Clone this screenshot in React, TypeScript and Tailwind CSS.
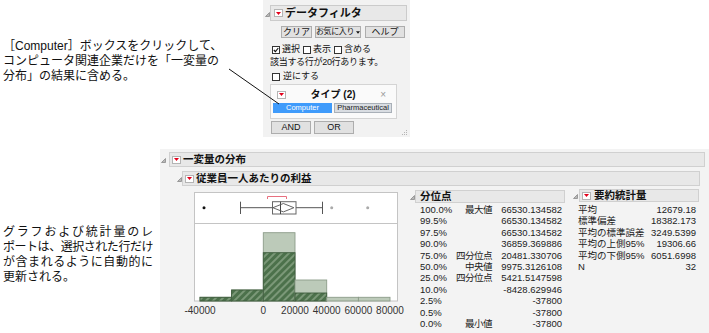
import React from 'react';

const RedMenu: React.FC<{ className?: string }> = ({ className = '' }) => (
  <span className={`flex h-[8px] w-[9px] shrink-0 items-center justify-center border border-[#b4b4b4] bg-white ${className}`}>
    <svg width="5" height="3" viewBox="0 0 5 3">
      <polygon points="0,0 5,0 2.5,3" fill="#e3001b" />
    </svg>
  </span>
);

const Disclose: React.FC<{ className?: string }> = ({ className = '' }) => (
  <svg width="5" height="5" viewBox="0 0 5 5" className={`shrink-0 ${className}`}>
    <polygon points="4.5,0.5 4.5,4.5 0.5,4.5" fill="#b8b8b8" stroke="#8a8a8a" strokeWidth="0.8" />
  </svg>
);

const CheckBox: React.FC<{ checked?: boolean }> = ({ checked }) => (
  <span className="flex h-[8px] w-[8px] shrink-0 items-center justify-center border border-[#333] bg-white">
    {checked && (
      <svg width="6" height="6" viewBox="0 0 6 6">
        <path d="M0.8 3 L2.4 4.7 L5.3 1" fill="none" stroke="#111" strokeWidth="1.1" />
      </svg>
    )}
  </span>
);

const Btn: React.FC<{ w: string; children: React.ReactNode }> = ({ w, children }) => (
  <div className={`flex h-[12px] ${w} items-center justify-center whitespace-nowrap border border-[#adadad] bg-[#e1e1e1] text-[9px] leading-none text-[#111]`}>
    {children}
  </div>
);

const DataFilter: React.FC = () => (
  <div className="flex h-[137px] w-[147px] flex-col bg-[#f2f2f2] pl-[2px] pr-[3px] text-[#111]">
    <div className="mt-[5px] flex items-end">
      <Disclose className="mb-[4px]" />
      <div className="flex h-[16px] flex-1 items-center border border-[#cbcbcb] bg-[#e8e8e8] pl-[3px]">
        <RedMenu />
        <span className="ml-[2px] text-[11px] font-bold leading-none">データフィルタ</span>
      </div>
    </div>
    <div className="ml-[16px] mt-[5px] flex">
      <Btn w="w-[31px]">クリア</Btn>
      <div className="ml-[3px]">
        <Btn w="w-[46px]">
          <span className="text-[8px] tracking-[-0.4px]">お気に入り</span>
          <svg width="5" height="3" viewBox="0 0 5 3" className="ml-[2px]">
            <polygon points="0,0 5,0 2.5,3" fill="#111" />
          </svg>
        </Btn>
      </div>
      <div className="ml-[4px]">
        <Btn w="w-[40px]">ヘルプ</Btn>
      </div>
    </div>
    <div className="ml-[7px] mt-[7px] flex h-[9px] items-center text-[9px] leading-none">
      <CheckBox checked />
      <span className="ml-[2px]">選択</span>
      <span className="ml-[3px]"><CheckBox /></span>
      <span className="ml-[2px]">表示</span>
      <span className="ml-[3px]"><CheckBox /></span>
      <span className="ml-[2px]">含める</span>
    </div>
    <div className="ml-[5px] mt-[4px] h-[9px] text-[9px] leading-none tracking-[-0.3px]">該当する行が20行あります。</div>
    <div className="ml-[7px] mt-[5px] flex h-[9px] items-center text-[9px] leading-none">
      <CheckBox />
      <span className="ml-[3px]">逆にする</span>
    </div>
    <div className="ml-[5px] mt-[3px] flex h-[35px] w-[127px] flex-col border border-[#d4d4d4] bg-[#fafafa]">
      <div className="mt-[5px] flex h-[9px] items-center pl-[6px] pr-[10px]">
        <RedMenu />
        <span className="flex-1 text-center text-[10px] font-bold leading-none">タイプ (2)</span>
        <span className="text-[10px] leading-none text-[#999]">×</span>
      </div>
      <div className="ml-[2px] mt-[4px] flex">
        <div className="flex h-[10px] w-[59px] items-center justify-center bg-[#3f9bfb] text-[7.5px] leading-none text-white">Computer</div>
        <div className="ml-[2px] flex h-[10px] w-[58px] items-center justify-center border border-[#a9b0b8] bg-[#d9dde2] text-[7.5px] leading-none text-[#222]">Pharmaceutical</div>
      </div>
    </div>
    <div className="mt-[2px] flex items-end pl-[6px]">
      <div className="flex h-[13px] w-[40px] items-center justify-center border border-[#adadad] bg-[#e1e1e1] text-[9px] leading-none">AND</div>
      <div className="ml-[3px] flex h-[13px] w-[40px] items-center justify-center border border-[#adadad] bg-[#e1e1e1] text-[9px] leading-none">OR</div>
      <svg width="7" height="7" viewBox="0 0 7 7" className="mb-[-2px] ml-auto mr-[-1px]">
        <rect x="5" y="1" width="1" height="1" fill="#b5b5b5" />
        <rect x="3" y="3" width="1" height="1" fill="#b5b5b5" />
        <rect x="5" y="3" width="1" height="1" fill="#b5b5b5" />
        <rect x="1" y="5" width="1" height="1" fill="#b5b5b5" />
        <rect x="3" y="5" width="1" height="1" fill="#b5b5b5" />
        <rect x="5" y="5" width="1" height="1" fill="#b5b5b5" />
      </svg>
    </div>
  </div>
);

// x/y in svg space: svg left = 182, top = 189 in page coords
const bins = [
  { x0: 18, x1: 49.6, light: 108.3, dark: 108.3 },
  { x0: 49.6, x1: 81.3, light: 101, dark: 101 },
  { x0: 81.3, x1: 113, light: 43.7, dark: 63.7 },
  { x0: 113, x1: 144.7, light: 91, dark: 104 },
  { x0: 144.7, x1: 176.4, light: 108.3, dark: null },
  { x0: 176.4, x1: 208, light: 108.3, dark: null },
];

const ticks = [
  { x: 18, label: '-40000' },
  { x: 81.3, label: '0' },
  { x: 113, label: '20000' },
  { x: 144.7, label: '40000' },
  { x: 176.4, label: '60000' },
  { x: 208, label: '80000' },
];

const Plot: React.FC = () => (
  <svg width="224" height="132" viewBox="0 0 224 132" className="shrink-0">
    <defs>
      <pattern id="hatch" width="5" height="5" patternUnits="userSpaceOnUse" patternTransform="rotate(45)">
        <rect width="5" height="5" fill="#4c714b" />
        <rect width="2" height="5" fill="#7b9878" />
      </pattern>
    </defs>
    <rect x="12.5" y="3.5" width="203" height="108.5" fill="#fff" stroke="#c4c4c4" />
    <line x1="12.5" y1="34.5" x2="215.5" y2="34.5" stroke="#c4c4c4" />
    {/* box plot */}
    <circle cx="22" cy="18.7" r="1.5" fill="#111" />
    <circle cx="149.7" cy="18.7" r="1.5" fill="#aaa" />
    <circle cx="185.7" cy="18.7" r="1.5" fill="#aaa" />
    <line x1="58" y1="18.7" x2="90.3" y2="18.7" stroke="#555" />
    <line x1="114" y1="18.7" x2="140.7" y2="18.7" stroke="#555" />
    <line x1="58.5" y1="12.7" x2="58.5" y2="25" stroke="#555" />
    <line x1="140.5" y1="12.7" x2="140.5" y2="25" stroke="#555" />
    <rect x="90.5" y="12.7" width="23.5" height="12.3" fill="#fff" stroke="#666" />
    <line x1="98.5" y1="12.7" x2="98.5" y2="25" stroke="#444" />
    <polygon points="90.9,18.7 101.4,14.5 111.9,18.7 101.4,22.9" fill="none" stroke="#555" strokeWidth="0.9" />
    <polyline points="85.5,10 85.5,7.5 104.5,7.5 104.5,10" fill="none" stroke="#e8707f" />
    {/* histogram */}
    {bins.map((b, i) => (
      <g key={i}>
        <rect x={b.x0} y={b.light} width={b.x1 - b.x0} height={112 - b.light} fill="#bccab9" stroke="#8c9c89" strokeWidth="0.9" />
        {b.dark !== null && (
          <rect x={b.x0} y={b.dark} width={b.x1 - b.x0} height={112 - b.dark} fill="url(#hatch)" stroke="#3e5c3d" strokeWidth="0.9" />
        )}
      </g>
    ))}
    {ticks.map((t) => (
      <text key={t.label} x={t.x} y="124.5" textAnchor="middle" fontSize="10" fill="#333" fontFamily="Liberation Sans, sans-serif">
        {t.label}
      </text>
    ))}
  </svg>
);

const quantiles: [string, string, string][] = [
  ['100.0%', '最大値', '66530.134582'],
  ['99.5%', '', '66530.134582'],
  ['97.5%', '', '66530.134582'],
  ['90.0%', '', '36859.369886'],
  ['75.0%', '四分位点', '20481.330706'],
  ['50.0%', '中央値', '9975.3126108'],
  ['25.0%', '四分位点', '5421.5147598'],
  ['10.0%', '', '-8428.629946'],
  ['2.5%', '', '-37800'],
  ['0.5%', '', '-37800'],
  ['0.0%', '最小値', '-37800'],
];

const summary: [string, string][] = [
  ['平均', '12679.18'],
  ['標準偏差', '18382.173'],
  ['平均の標準誤差', '3249.5399'],
  ['平均の上側95%', '19306.66'],
  ['平均の下側95%', '6051.6998'],
  ['N', '32'],
];

const Report: React.FC = () => (
  <div className="flex-1 bg-[#f3f3f3] pt-[3px] text-[#111]">
    <div className="flex items-end pl-[1px] pr-[4px]">
      <Disclose className="mb-[4px]" />
      <div className="ml-[3px] flex h-[15px] flex-1 items-center border border-[#d0d0d0] bg-[#e8e8e8] pl-[2px]">
        <RedMenu />
        <span className="ml-[2px] text-[10.5px] font-bold leading-none">一変量の分布</span>
      </div>
    </div>
    <div className="mt-[4px] flex items-end pl-[17px] pr-[9px]">
      <Disclose className="mb-[4px]" />
      <div className="flex h-[15px] flex-1 items-center border border-[#d0d0d0] bg-[#e8e8e8] pl-[2px]">
        <RedMenu />
        <span className="ml-[2px] text-[10.5px] font-bold leading-none">従業員一人あたりの利益</span>
      </div>
    </div>
    <div className="mt-[3px] flex">
      <div className="ml-[22px]">
        <Plot />
      </div>
      <div className="ml-[4px] flex flex-col">
        <div className="mt-[1px] flex items-end">
          <Disclose className="mb-[3px]" />
          <div className="flex h-[13px] w-[150px] items-center border border-[#d0d0d0] bg-[#e8e8e8] pl-[4px]">
            <span className="text-[10.5px] font-bold leading-none">分位点</span>
          </div>
        </div>
        <div className="mt-[1px] flex flex-col pl-[10px] text-[9.5px] leading-[11.4px] text-[#222]">
          {quantiles.map(([p, l, v]) => (
            <div key={p} className="flex whitespace-nowrap">
              <span className="w-[31px]">{p}</span>
              <span className="w-[41px] text-right tracking-[-0.5px]">{l}</span>
              <span className="w-[70px] text-right">{v}</span>
            </div>
          ))}
        </div>
      </div>
      <div className="ml-[8px] flex flex-col">
        <div className="flex items-end">
          <Disclose className="mb-[3px]" />
          <div className="ml-[1px] flex h-[13px] w-[120px] items-center border border-[#d0d0d0] bg-[#e8e8e8] pl-[2px]">
            <RedMenu />
            <span className="ml-[3px] text-[10.5px] font-bold leading-none">要約統計量</span>
          </div>
        </div>
        <div className="mt-[2px] flex w-[123px] flex-col pl-[5px] text-[9.5px] leading-[11.4px] text-[#222]">
          {summary.map(([l, v]) => (
            <div key={l} className="flex justify-between whitespace-nowrap">
              <span>{l}</span>
              <span>{v}</span>
            </div>
          ))}
        </div>
      </div>
    </div>
  </div>
);

export default function App() {
  return (
    <div className="relative h-[333px] w-[709px] overflow-hidden bg-white font-['Liberation_Sans','Noto_Sans_CJK_JP',sans-serif]">
      <div className="flex h-[149px]">
        <div className="w-[263px] pl-[3px] pt-[39px] text-[12px] leading-[15px] text-[#111]">
          <div className="whitespace-nowrap">［Computer］ボックスをクリックして、</div>
          <div className="whitespace-nowrap">コンピュータ関連企業だけを「一変量の</div>
          <div className="whitespace-nowrap">分布」の結果に含める。</div>
        </div>
        <DataFilter />
      </div>
      <div className="flex h-[184px]">
        <div className="w-[160px] pl-[3px] pt-[76px] text-[12px] leading-[15px] text-[#111]">
          <div className="w-[150px] whitespace-nowrap text-justify [text-align-last:justify]">グラフおよび統計量のレ</div>
          <div className="w-[150px] whitespace-nowrap text-justify tracking-[-0.5px] [text-align-last:justify]">ポートは、選択された行だけ</div>
          <div className="w-[150px] whitespace-nowrap text-justify [text-align-last:justify]">が含まれるように自動的に</div>
          <div className="whitespace-nowrap">更新される。</div>
        </div>
        <Report />
      </div>
      <svg className="pointer-events-none absolute left-0 top-0" width="709" height="333">
        <line x1="229" y1="69" x2="279" y2="104" stroke="#111" strokeWidth="1" />
      </svg>
    </div>
  );
}
